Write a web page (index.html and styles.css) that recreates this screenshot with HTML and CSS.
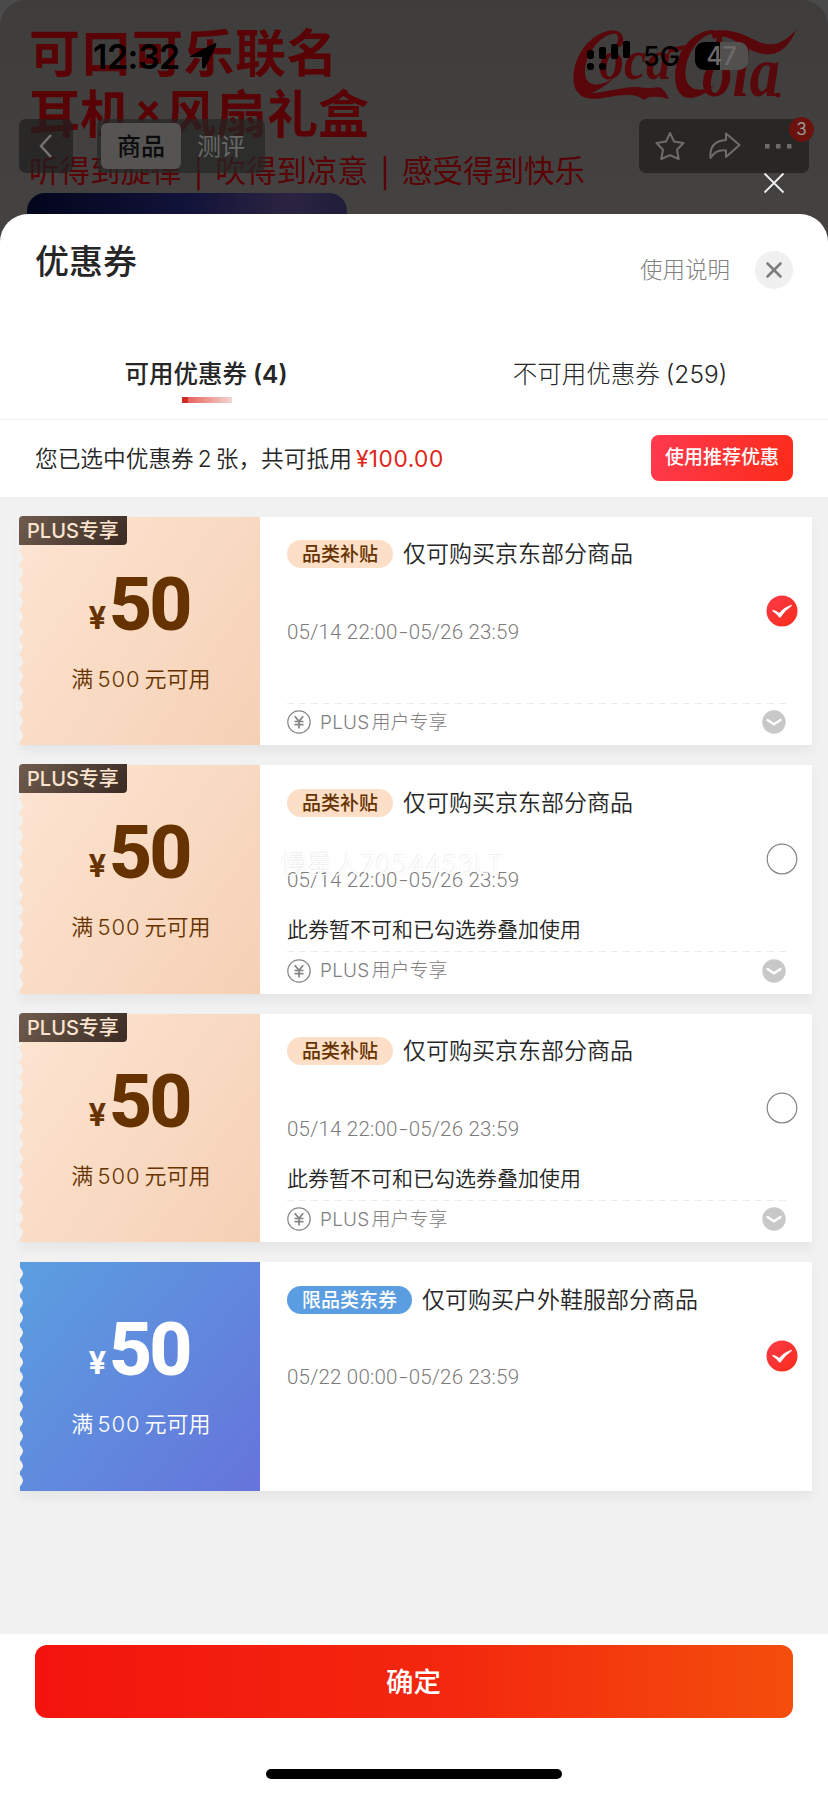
FILE: index.html
```html
<!DOCTYPE html>
<html lang="zh-CN">
<head>
<meta charset="utf-8">
<title>优惠券</title>
<link rel="stylesheet" href="styles.css">
</head>
<body>
<svg class="defs" width="0" height="0">
  <defs>
    <linearGradient id="red" x1="0" y1="0" x2="1" y2="1"><stop offset="0" stop-color="#fb3b4b"/><stop offset="1" stop-color="#fa2c19"/></linearGradient>
    <linearGradient id="cola" x1="0" y1="0" x2="1" y2="0"><stop offset="0" stop-color="#5a0509"/><stop offset="1" stop-color="#560a0d"/></linearGradient>
    <symbol id="check" viewBox="0 0 32 32"><circle cx="16" cy="16" r="15.5" fill="url(#red)"/><path d="M7.200 14.800Q11 16 13.200 18Q18 12.200 25.500 9.800Q26.800 10.400 24.800 11.800Q19 15.500 14.800 22Q13.800 23 12.800 22Q10.500 18.500 6.600 16.200Q6 15 7.200 14.800Z" fill="#fff"/></symbol>
    <symbol id="radio" viewBox="0 0 32 32"><circle cx="16" cy="16" r="14.800" fill="#fff" stroke="#858585" stroke-width="1.200"/></symbol>
    <symbol id="down" viewBox="0 0 24 24"><circle cx="12" cy="12" r="11.700" fill="#c8c8c8"/><path d="M5.500 10L12 14.300L18.500 10" fill="none" stroke="#fff" stroke-width="2.400" stroke-linecap="round" stroke-linejoin="round"/></symbol>
    <symbol id="coin" viewBox="0 0 24 24"><g fill="none" stroke="#858585"><circle cx="12" cy="12" r="11.200" stroke-width="1.200"/><path d="M7.800 6.200L12 11.300L16.200 6.200M12 11.300V18.500M7.500 11.500H16.500M7.500 14.700H16.500" stroke-width="1.700"/></g></symbol>
  </defs>
</svg>
<div class="screen">
  <header class="hero">
    <div class="poster">
      <div class="poster-top">
        <div class="slogan">
          <p class="big">可口可乐联名</p>
          <p class="big second">耳机<span class="times">×</span>风扇礼盒</p>
        </div>
        <svg class="cola" width="230" height="84" viewBox="0 0 230 84">
          <g fill="url(#cola)">
            <path d="M50 15C52 5 44 -1 31 4C10 12 -2 36 1 56C4 74 24 66 41 50C30 57 17 60 13 50C8 35 22 10 39 6C46 4 47 11 42 19C45 20 49 19 50 15Z"/>
            <text x="26" y="51" font-size="58" textLength="72" lengthAdjust="spacingAndGlyphs">oca</text>
            <path d="M96 20L112 17L110 22L95 25Z"/>
            <path d="M149 16C151 4 143 -1 130 4C109 12 99 37 103 57C107 76 127 72 141 58C130 63 119 64 114 54C108 37 121 10 138 6C145 4 145 11 140 21C144 22 148 20 149 16Z"/>
            <text x="129" y="68" font-size="72" textLength="78" lengthAdjust="spacingAndGlyphs">ola</text>
            <path d="M3 60C16 72 43 58 64 59Q76 61 86 59Q92 61 96 71Q86 68 76 69L71 72Q65 67 55 67C38 67 26 73 14 70Q6 69 3 60Z"/>
            <path d="M138 4C154 -1 170 6 184 13C202 21 212 13 223 2Q216 20 203 25C184 31 171 16 156 10Q147 7 140 11Z"/>
            <circle cx="205" cy="67" r="2.500"/>
          </g>
        </svg>
      </div>
      <p class="sub"><span>听得到旋律</span><i>|</i><span>吹得到凉意</span><i>|</i><span>感受得到快乐</span></p>
      <div class="product"></div>
    </div>
    <div class="status">
      <span class="clock">12:32</span>
      <svg class="loc" width="28" height="28" viewBox="0 0 28 28"><path d="M1 13L26 0Q28 0 27 3L16 25Q14 27 13 24V14H2Q0 14 1 13Z"/></svg>
      <svg class="signal" width="44" height="30" viewBox="0 0 44 30"><rect x="0" y="9" width="7" height="9" rx="3"/><rect x="12" y="6" width="7" height="12" rx="2"/><rect x="24" y="3" width="7" height="15" rx="2"/><rect x="36" y="0" width="7" height="17" rx="2"/><rect x="0" y="22" width="7" height="7" rx="3"/><rect x="12" y="22" width="7" height="7" rx="3"/></svg>
      <span class="net">5G</span>
      <span class="battery"><b>4</b><b>7</b></span>
    </div>
    <nav class="nav">
      <span class="back"><svg width="16" height="26" viewBox="0 0 16 26"><path d="M13 2L3 13L13 24" fill="none" stroke="#747371" stroke-width="2.500"/></svg></span>
      <span class="switch"><span class="on">商品</span><span>测评</span></span>
      <span class="tools">
        <svg width="32" height="32" viewBox="0 0 32 32"><path d="M16 3L20 11.500L29.500 13L23 19.700L24.700 29L16 25.200L7.300 29L9 19.700L2.500 13L12 11.500Z"/></svg>
        <svg width="32" height="32" viewBox="0 0 32 32"><path d="M17 3.500L30.500 15L17 27V20.500Q7 19 1.500 28Q0 11 17 10Z"/></svg>
        <svg width="28" height="32" viewBox="0 0 28 32"><g fill="#6e6d6b" stroke="none"><rect x="1" y="14" width="4.500" height="4.500"/><rect x="12" y="14" width="4.500" height="4.500"/><rect x="23" y="14" width="4.500" height="4.500"/></g></svg>
        <em>3</em>
      </span>
    </nav>
    <svg class="dismiss" width="22" height="22" viewBox="0 0 22 22"><path d="M1.500 1.500L20.500 20.500M20.500 1.500L1.500 20.500" stroke="#eee" stroke-width="1.800"/></svg>
  </header>

  <main class="sheet">
    <div class="head">
      <h1>优惠券</h1>
      <div class="head-right">
        <span class="help">使用说明</span>
        <svg width="38" height="38" viewBox="0 0 38 38"><circle cx="19" cy="19" r="19" fill="#f0f0f0"/><path d="M12.500 12.500L25.500 25.500M25.500 12.500L12.500 25.500" stroke="#7d7d7d" stroke-width="2.600" stroke-linecap="round"/></svg>
      </div>
    </div>
    <div class="tabs">
      <div class="tab active"><span>可用优惠券<span class="num">(4)</span></span></div>
      <div class="tab"><span>不可用优惠券<span class="num">(259)</span></span></div>
    </div>
    <div class="summary">
      <p>您已选中优惠券<span class="n">2</span>张，共可抵用<span class="price">¥100.00</span></p>
      <button class="recommend">使用推荐优惠</button>
    </div>

    <div class="list">
      <article class="card plus">
        <div class="amount"><span class="ribbon">PLUS专享</span><p class="money"><small>¥</small>50</p><p class="cond">满<span>500</span>元可用</p></div>
        <div class="info">
          <div class="line"><span class="tag">品类补贴</span><h2>仅可购买京东部分商品</h2></div>
          <p class="date">05/14 22:00<i>-</i>05/26 23:59</p>
          <p class="note"></p>
          <div class="foot"><svg width="24" height="24"><use href="#coin"/></svg><span><b>PLUS</b>用户专享</span><svg class="more" width="24" height="24"><use href="#down"/></svg></div>
          <svg class="pick" width="32" height="32"><use href="#check"/></svg>
        </div>
      </article>
      <article class="card plus">
        <div class="amount"><span class="ribbon">PLUS专享</span><p class="money"><small>¥</small>50</p><p class="cond">满<span>500</span>元可用</p></div>
        <div class="info">
          <div class="line"><span class="tag">品类补贴</span><h2>仅可购买京东部分商品</h2></div>
          <p class="date">05/14 22:00<i>-</i>05/26 23:59</p>
          <p class="note">此券暂不可和已勾选券叠加使用</p>
          <div class="foot"><svg width="24" height="24"><use href="#coin"/></svg><span><b>PLUS</b>用户专享</span><svg class="more" width="24" height="24"><use href="#down"/></svg></div>
          <svg class="pick" width="32" height="32"><use href="#radio"/></svg>
          <span class="watermark">慢星人7054453LT</span>
        </div>
      </article>
      <article class="card plus">
        <div class="amount"><span class="ribbon">PLUS专享</span><p class="money"><small>¥</small>50</p><p class="cond">满<span>500</span>元可用</p></div>
        <div class="info">
          <div class="line"><span class="tag">品类补贴</span><h2>仅可购买京东部分商品</h2></div>
          <p class="date">05/14 22:00<i>-</i>05/26 23:59</p>
          <p class="note">此券暂不可和已勾选券叠加使用</p>
          <div class="foot"><svg width="24" height="24"><use href="#coin"/></svg><span><b>PLUS</b>用户专享</span><svg class="more" width="24" height="24"><use href="#down"/></svg></div>
          <svg class="pick" width="32" height="32"><use href="#radio"/></svg>
        </div>
      </article>
      <article class="card blue">
        <div class="amount"><p class="money"><small>¥</small>50</p><p class="cond">满<span>500</span>元可用</p></div>
        <div class="info">
          <div class="line"><span class="tag">限品类东券</span><h2>仅可购买户外鞋服部分商品</h2></div>
          <p class="date">05/22 00:00<i>-</i>05/26 23:59</p>
          <svg class="pick" width="32" height="32"><use href="#check"/></svg>
        </div>
      </article>
    </div>

    <footer class="bottom">
      <button class="confirm">确定</button>
      <span class="home"></span>
    </footer>
  </main>
</div>
</body>
</html>
```
FILE: styles.css
```css
* { box-sizing: border-box; }
body, p, h1, h2 { margin: 0; }
body {
  width: 828px;
  font-family: Inter, "Noto Sans CJK SC", sans-serif;
  color: #262626;
  background: #4a4a4a;
}
button { border: 0; padding: 0; font-family: inherit; color: #fff; }
svg { display: block; flex: none; }
.defs { position: absolute; }
.screen { width: 828px; height: 1795px; overflow: hidden; display: flex; flex-direction: column; }

/* dimmed product page */
.hero { position: relative; height: 214px; flex: none; }
.poster {
  height: 244px;
  padding: 27px 30px 0 29px;
  background: linear-gradient(#3e3d3b, #454342);
  border-radius: 26px 26px 0 0;
  color: #5a0307;
  font-family: "Noto Sans CJK SC", sans-serif;
}
.poster-top { display: flex; justify-content: space-between; height: 125px; }
.big { font-size: 51px; line-height: 51px; font-weight: 700; white-space: nowrap; letter-spacing: .5px; margin-top: -2px; }
.second { margin-top: 10px; letter-spacing: 0; }
.times { display: inline-block; width: 33px; height: 51px; margin-left: 1px; font: 700 44px/51px Roboto, sans-serif; text-align: center; vertical-align: top; }
.cola { font-family: "Liberation Serif", serif; font-weight: 700; font-style: italic; margin: 1px -5px 0 0; overflow: visible; }
.sub { display: flex; height: 37px; line-height: 35px; font-size: 30.5px; white-space: nowrap; }
.sub i { font-style: normal; width: 34px; text-align: center; font-weight: 500; }
.product {
  width: 320px; height: 50px; margin: 4px 0 0 -2px;
  border-radius: 18px 18px 0 0;
  background: linear-gradient(100deg, #03051c, #12133a 50%, #2b2440 80%, #1e1c38);
}
.status {
  position: absolute; left: 93px; top: 40px; height: 32px;
  display: flex; align-items: center; color: #000;
}
.clock { width: 96px; font-size: 34px; font-weight: 600; letter-spacing: -.5px; }
.loc { margin-top: 2px; }
.signal { margin-left: 370px; }
.net { margin-left: 12px; width: 52px; font-size: 27px; font-weight: 500; }
.battery {
  width: 53px; height: 28px; border-radius: 9px; display: flex; justify-content: center; align-items: center;
  font-size: 25px; color: #6b6a69; background: linear-gradient(90deg, #000 48%, #51504f 48%);
}
.battery b { font-weight: 500; }
.nav {
  position: absolute; left: 19px; top: 119px; width: 790px; height: 54px;
  display: flex; align-items: center;
}
.back {
  width: 54px; height: 54px; border-radius: 7px; display: flex; align-items: center; justify-content: center;
  background: rgba(32, 31, 30, .72);
}
.switch {
  width: 168px; height: 54px; margin-left: 24px; padding: 4px; border-radius: 7px; display: flex;
  background: rgba(38, 37, 36, .72); font-size: 24px; line-height: 47px; color: #696867;
}
.switch span { width: 80px; text-align: center; }
.switch .on { background: #555453; color: #0b0b0b; border-radius: 6px; font-weight: 500; }
.tools {
  position: relative; margin-left: auto; width: 170px; height: 54px; padding: 0 17px 0 15px; border-radius: 7px;
  display: flex; align-items: center; justify-content: space-between; background: #282726;
}
.tools svg { fill: none; stroke: #6e6d6b; stroke-width: 2; stroke-linejoin: round; }
.tools em {
  position: absolute; right: -5px; top: -2px; width: 25px; height: 25px; border-radius: 50%;
  background: #6b120d; color: #999; font: 17px/25px Inter, sans-serif; text-align: center;
}
.dismiss { position: absolute; left: 763px; top: 172px; }

/* coupon sheet */
.sheet {
  position: relative; flex: 1; display: flex; flex-direction: column;
  background: #fff; border-radius: 28px 28px 0 0;
}
.head { height: 110px; padding: 0 35px 0 35px; display: flex; justify-content: space-between; }
h1 { margin-top: 24px; font-size: 34px; line-height: 48px; font-weight: 500; }
.head-right { display: flex; align-items: center; height: 112px; gap: 25px; }
.help { font-size: 22.5px; font-weight: 300; color: #808080; margin-top: -4px; }
.tabs { height: 96px; display: flex; border-bottom: 1px solid #f1f1f1; }
.tab { position: relative; flex: 1; padding-top: 30px; text-align: center; font-size: 24.500px; line-height: 40px; font-weight: 300; white-space: nowrap; }
.tab > span { margin-left: -2px; }
.tab .num { margin-left: 6px; }
.active { font-weight: 500; }
.active .num { font-weight: 600; }
.active::after {
  content: ""; position: absolute; left: 182px; top: 73px; width: 50px; height: 6px;
  background: linear-gradient(90deg, #cf2a26 12%, #e8635d 12%, #f3d6d4);
}
.summary { height: 77px; padding: 0 35px; display: flex; align-items: center; justify-content: space-between; }
.summary p { font-size: 22.700px; font-weight: 350; white-space: nowrap; margin-top: -2px; }
.summary .n { margin: 0 4px; }
.price { margin-left: 4px; color: #e0261b; font-weight: 400; letter-spacing: .5px; }
.recommend {
  width: 142px; height: 46px; border-radius: 8px; font-size: 19px; line-height: 46px; font-weight: 500; margin-top: -1px;
  background: linear-gradient(110deg, #ff3a50, #fb2b18);
}
.list { height: 1137px; padding: 19.5px 16px 0 20px; display: flex; flex-direction: column; gap: 20px; background: #f1f1f1; }
.card { display: flex; height: 228.5px; flex: none; background: #fff; box-shadow: 0 6px 10px rgba(0, 0, 0, .05); }
.amount { position: relative; width: 240px; display: flex; flex-direction: column; align-items: center; padding-top: 47px; }
.plus .amount { color: #663300; background: linear-gradient(125deg, #fde5d2, #f5d0b5); }
.blue .amount { color: #fff; background: linear-gradient(130deg, #5b9fe0, #6674db); }
.amount::before {
  content: ""; position: absolute; left: -4px; top: 4px; width: 7px; height: 222px;
  background: radial-gradient(circle at 0 50%, #f1f1f1 6.500px, transparent 7px) 0 0 / 7px 14.800px;
}
.ribbon {
  position: absolute; left: -1px; top: -1px; width: 108px; height: 29px; border-radius: 4px 0 4px 0;
  padding-left: 8px; font: 500 20px/30px Inter, "Noto Sans CJK SC", sans-serif; white-space: nowrap;
  color: #fbe4cf; background: linear-gradient(125deg, #705c4e, #3a2b23);
}
.money { height: 80px; line-height: 81px; font-family: Roboto, sans-serif; font-weight: 800; font-size: 75px; letter-spacing: -3px; white-space: nowrap; margin-left: -2px; }
.money small { font-family: Inter, sans-serif; font-size: 31px; font-weight: 700; letter-spacing: 3px; position: relative; top: -1px; }
.cond { margin: 19px 0 0 2px; font-size: 22px; font-weight: 350; line-height: 32px; white-space: nowrap; }
.cond span { margin: 0 4px; letter-spacing: 1px; }
.info { position: relative; flex: 1; padding: 23px 25px 0 27px; }
.line { display: flex; align-items: center; height: 29px; gap: 10px; }
.tag { height: 28px; padding: 0 15px; border-radius: 14px; font-size: 19px; line-height: 29px; font-weight: 500; white-space: nowrap; }
.plus .tag { color: #663300; background: #fddfc7; }
.blue .tag { color: #fff; background: #5a9de0; }
h2 { font-size: 23px; font-weight: 350; line-height: 30px; white-space: nowrap; margin-top: 0; }
.date { margin-top: 48px; font: 300 20.500px/30px Roboto, sans-serif; color: #7c7c7c; letter-spacing: .2px; white-space: nowrap; }
.date i { font-style: normal; display: inline-block; width: 11px; transform: scaleX(1.5); text-align: center; }
.note { margin-top: 19px; height: 37px; line-height: 31px; font-size: 21px; font-weight: 350; white-space: nowrap; }
.foot {
  display: flex; align-items: center; height: 39px; color: #808080; font-size: 19px; font-weight: 300;
  background: repeating-linear-gradient(90deg, #ececec 0 7px, transparent 7px 12px) 0 0 / 500px 1px no-repeat;
}
.foot span { margin: -4px 0 0 9px; }
.foot b { font-weight: 300; margin-right: 2px; letter-spacing: .2px; }
.foot .more { margin: 0 1px 0 auto; }
.pick { position: absolute; right: 14px; top: 78px; }
.watermark {
  position: absolute; left: 21px; top: 82px; font-size: 26px; line-height: 36px; font-weight: 300; letter-spacing: .6px; white-space: nowrap;
  color: #fff; text-shadow: -1px -1px 1px rgba(0, 0, 0, .07), 1px 1px 1px rgba(0, 0, 0, .04);
}
.bottom { flex: 1; padding-top: 11px; display: flex; flex-direction: column; align-items: center; }
.confirm { width: 758px; height: 73px; border-radius: 12px; padding: 0 1px 3px 0; font-size: 27.500px; font-weight: 500; background: linear-gradient(90deg, #f3140d, #f3280e 55%, #f44e0c); }
.home { width: 296px; height: 10px; margin-top: 51px; border-radius: 5px; background: #000; }
```
